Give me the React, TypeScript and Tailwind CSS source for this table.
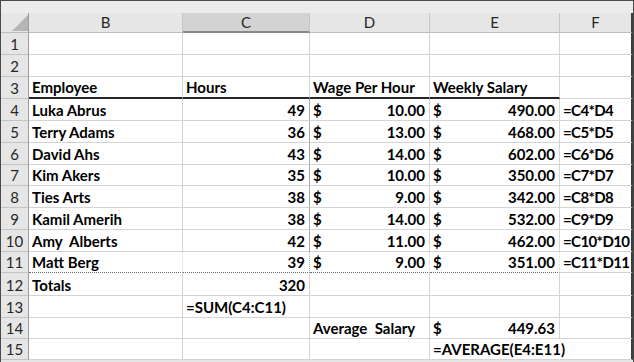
import React from "react";

type Cell = {
  text?: string;
  align?: "left" | "right";
  money?: boolean; // "$" at left, amount at right
  overflow?: boolean;
};

type Row = {
  h: string;
  cells: Cell[]; // B..F
  bottom?: "header" | "dotted";
};

const L = (text: string): Cell => ({ text, align: "left" });
const R = (text: string): Cell => ({ text, align: "right" });
const M = (text: string): Cell => ({ text, money: true });
const E: Cell = {};

const rows: Row[] = [
  { h: "h-[22px]", cells: [E, E, E, E, E] },
  { h: "h-[22px]", cells: [E, E, E, E, E] },
  { h: "h-[22px]", cells: [L("Employee"), L("Hours"), L("Wage Per Hour"), L("Weekly Salary"), E], bottom: "header" },
  { h: "h-[22px]", cells: [L("Luka Abrus"), R("49"), M("10.00"), M("490.00"), L("=C4*D4")] },
  { h: "h-[22px]", cells: [L("Terry Adams"), R("36"), M("13.00"), M("468.00"), L("=C5*D5")] },
  { h: "h-[22px]", cells: [L("David Ahs"), R("43"), M("14.00"), M("602.00"), L("=C6*D6")] },
  { h: "h-[21px]", cells: [L("Kim Akers"), R("35"), M("10.00"), M("350.00"), L("=C7*D7")] },
  { h: "h-[22px]", cells: [L("Ties Arts"), R("38"), M("9.00"), M("342.00"), L("=C8*D8")] },
  { h: "h-[22px]", cells: [L("Kamil Amerih"), R("38"), M("14.00"), M("532.00"), L("=C9*D9")] },
  { h: "h-[22px]", cells: [L("Amy  Alberts"), R("42"), M("11.00"), M("462.00"), L("=C10*D10")] },
  { h: "h-[21px]", cells: [L("Matt Berg"), R("39"), M("9.00"), M("351.00"), L("=C11*D11")], bottom: "dotted" },
  { h: "h-[23px]", cells: [L("Totals"), R("320"), E, E, E] },
  { h: "h-[22px]", cells: [E, L("=SUM(C4:C11)"), E, E, E] },
  { h: "h-[21px]", cells: [E, E, L("Average  Salary"), M("449.63"), E] },
  { h: "h-[21px]", cells: [E, E, E, { text: "=AVERAGE(E4:E11)", align: "left", overflow: true }, E] },
];

const letters = ["B", "C", "D", "E", "F"];
const colW = ["w-[154px]", "w-[127px]", "w-[120px]", "w-[130px]", "w-[73px]"];

function DataCell({ cell, col, row, rowIdx }: { cell: Cell; col: number; row: Row; rowIdx: number }) {
  const isLast = col === 4;

  let bottom = "border-b border-b-[#d4d4d4]";
  if (row.bottom === "header" && !isLast) bottom = "border-b-2 border-b-[#262626]";
  if (row.bottom === "dotted" && !isLast) bottom = "border-b border-dotted border-b-[#6a6a6a]";

  let right = "border-r border-r-[#d4d4d4]";
  if (isLast) right = "border-r-2 border-r-[#3c3c3c]";
  if (cell.overflow) right = "border-r border-r-transparent";
  if (rowIdx >= 3 && rowIdx <= 10 && col === 1) right = "border-r border-r-[#a8a8a8]";

  return (
    <div
      className={`relative ${colW[col]} ${row.h} shrink-0 ${bottom} ${right} flex items-end pb-[1px] bg-white ${
        isLast ? "tracking-[-0.6px]" : ""
      }`}
    >
      {cell.money ? (
        <div className="flex w-full items-end justify-between pl-[3px] pr-[4px]">
          <span>$</span>
          <span>{cell.text}</span>
        </div>
      ) : cell.text ? (
        <span
          className={`whitespace-pre ${cell.align === "right" ? "ml-auto pr-[4px]" : "pl-[3px]"} ${
            cell.overflow ? "absolute left-0 bottom-[1px] z-10" : ""
          }`}
        >
          {cell.text}
        </span>
      ) : null}
    </div>
  );
}

export default function App() {
  return (
    <div
      className="w-[634px] h-[362px] overflow-hidden bg-[#e4e4e4] border-t border-l border-r border-[#4a4a4a] text-black"
      style={{ fontFamily: "Lato, 'Open Sans', sans-serif" }}
    >
      {/* strip above the column letters */}
      <div className="h-[12px] bg-[#ececec]" />
      {/* column letters */}
      <div className="flex h-[20px] bg-[#e6e6e6]">
        <div className="relative w-[28px] shrink-0 border-r border-r-[#9c9c9c] border-b border-b-[#bcbcbc]">
          <svg className="absolute left-[11px] top-[2px]" width="16" height="16" viewBox="0 0 16 16">
            <polygon points="16,0 16,16 0,16" fill="#b5b5b5" />
          </svg>
        </div>
        {letters.map((l, i) => (
          <div
            key={l}
            className={`${colW[i]} shrink-0 flex items-center justify-center text-[15px] text-[#262626] ${
              i === 1
                ? "bg-[#d3d3d3] border-b-2 border-b-[#8a8a8a]"
                : "border-b border-b-[#bcbcbc]"
            } ${i === 4 ? "border-r-2 border-r-[#3c3c3c]" : "border-r border-r-[#c6c6c6]"}`}
          >
            {l}
          </div>
        ))}
      </div>
      {rows.map((row, r) => (
        <div key={r} className="flex font-bold text-[15px] leading-[18px]">
          <div
            className={`w-[28px] ${row.h} shrink-0 bg-[#e6e6e6] border-r border-r-[#9c9c9c] border-b border-b-[#c4c4c4] flex items-end justify-center pb-[1px] font-normal text-[#262626]`}
          >
            {r + 1}
          </div>
          {row.cells.map((c, i) => (
            <DataCell key={i} cell={c} col={i} row={row} rowIdx={r} />
          ))}
        </div>
      ))}
    </div>
  );
}
